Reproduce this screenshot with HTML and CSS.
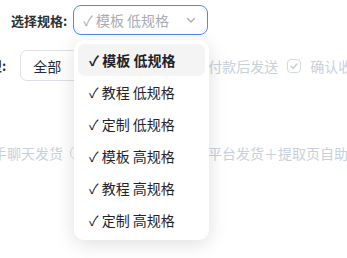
FILE: index.html
```html
<!DOCTYPE html>
<html lang="zh">
<head>
<meta charset="utf-8">
<link rel="stylesheet" href="styles.css">
</head>
<body>
<div class="page">
  <div class="row spec-row">
    <span class="label">选择规格:</span>
    <div class="select active">
      <span class="placeholder">✓ 模板 低规格</span>
      <svg class="chev" width="12" height="12" viewBox="0 0 12 12"><path d="M2.5 4.5 L6 8 L9.5 4.5" fill="none" stroke="#a8abb2" stroke-width="1.2" stroke-linecap="round" stroke-linejoin="round"/></svg>
    </div>
  </div>
  <div class="row type-row">
    <span class="label2">类型:</span>
    <div class="select plain"><span class="value">全部</span></div>
    <span class="check"></span>
    <span class="muted t1">付款后发送</span>
    <span class="check on"><svg width="10" height="10" viewBox="0 0 10 10"><path d="M2 5.2 L4.2 7.2 L8 3" fill="none" stroke="#c3cbd6" stroke-width="1.3" stroke-linecap="round" stroke-linejoin="round"/></svg></span>
    <span class="muted">确认收货后发送</span>
  </div>
  <div class="row ship-row">
    <span class="muted">手聊天发货</span>
    <span class="radio r1"></span>
    <span class="muted hidden-text">自动发货</span>
    <span class="muted">平台发货＋提取页自助</span>
  </div>
  <ul class="dropdown">
    <li class="item selected">✓ 模板 低规格</li>
    <li class="item">✓ 教程 低规格</li>
    <li class="item">✓ 定制 低规格</li>
    <li class="item">✓ 模板 高规格</li>
    <li class="item">✓ 教程 高规格</li>
    <li class="item">✓ 定制 高规格</li>
  </ul>
</div>
</body>
</html>
```
FILE: styles.css
```css
html, body {
  margin: 0;
  padding: 0;
  background: #ffffff;
}
body {
  width: 347px;
  height: 258px;
  overflow: hidden;
  font-family: "Noto Sans CJK SC", "Noto Sans", sans-serif;
  font-size: 14px;
  color: #303133;
}
.page {
  position: relative;
  padding-top: 5px;
}
.row {
  display: flex;
  align-items: center;
  white-space: nowrap;
}
.row > * {
  flex-shrink: 0;
}
.spec-row {
  padding-left: 11px;
}
.label {
  font-size: 13px;
  font-weight: 700;
  color: #303133;
  margin-right: 6px;
}
.select {
  box-sizing: border-box;
  height: 30px;
  border-radius: 8px;
  display: flex;
  align-items: center;
}
.select.active {
  width: 135px;
  border: 1px solid #4a8af4;
  padding: 0 10px 0 9px;
  justify-content: space-between;
}
.placeholder {
  color: #a8abb2;
  font-size: 14px;
}
.chev {
  display: block;
}
.type-row {
  margin-top: 15px;
  margin-left: -24px;
}
.label2 {
  font-size: 13px;
  font-weight: 700;
  margin-right: 14px;
}
.select.plain {
  width: 156px;
  height: 31px;
  border: 1px solid #dcdfe6;
  border-radius: 7px;
  padding-left: 12px;
}
.value {
  color: #1f2d3d;
}
.check {
  box-sizing: border-box;
  width: 14px;
  height: 14px;
  border: 1px solid #d4dae3;
  border-radius: 4px;
  margin: 0 6px 0 12px;
  display: flex;
  align-items: center;
  justify-content: center;
}
.check.on {
  margin: 0 9px 0 9px;
}
.muted {
  color: #c8d0db;
  font-size: 14px;
}
.ship-row {
  margin-top: 62px;
  margin-left: -7px;
}
.radio {
  box-sizing: border-box;
  width: 14px;
  height: 14px;
  border: 1px solid #d4dae3;
  border-radius: 50%;
}
.r1 {
  margin-left: 7px;
}
.hidden-text {
  margin-left: 6px;
  margin-right: 62px;
}
.dropdown {
  position: absolute;
  left: 74px;
  top: 40px;
  width: 135px;
  box-sizing: border-box;
  margin: 0;
  padding: 4px;
  list-style: none;
  background: #ffffff;
  border-radius: 10px;
  box-shadow: 0 4px 20px rgba(0, 0, 0, 0.13);
}
.item {
  height: 32px;
  line-height: 32px;
  padding-left: 11px;
  border-radius: 7px;
  color: #1f2329;
  font-size: 14px;
}
.item.selected {
  background: #f4f4f5;
  font-weight: 700;
}
```
